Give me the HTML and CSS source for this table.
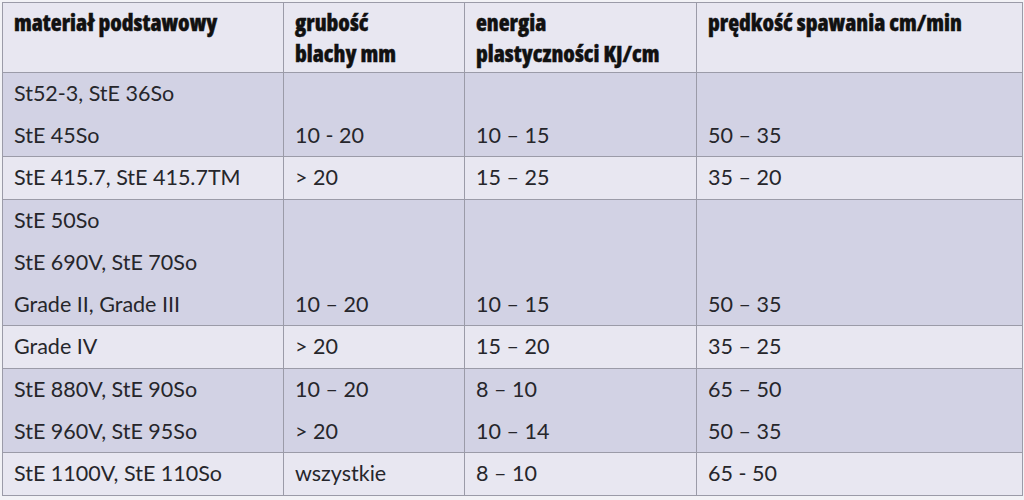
FILE: index.html
```html
<!DOCTYPE html>
<html lang="pl">
<head>
<meta charset="utf-8">
<title>Tabela spawania</title>
<link rel="stylesheet" href="styles.css">
</head>
<body>
<div class="wrap">
<table class="weld">
  <colgroup>
    <col class="c1"><col class="c2"><col class="c3"><col class="c4">
  </colgroup>
  <thead>
    <tr>
      <th>materiał podstawowy</th>
      <th>grubość<br>blachy mm</th>
      <th>energia<br>plastyczności KJ/cm</th>
      <th>prędkość spawania cm/min</th>
    </tr>
  </thead>
  <tbody>
    <tr class="dark">
      <td>St52-3, StE 36So<br>StE 45So</td>
      <td class="bot">10 - 20</td>
      <td class="bot">10 – 15</td>
      <td class="bot">50 – 35</td>
    </tr>
    <tr class="light">
      <td>StE 415.7, StE 415.7TM</td>
      <td>&gt; 20</td>
      <td>15 – 25</td>
      <td>35 – 20</td>
    </tr>
    <tr class="dark">
      <td>StE 50So<br>StE 690V, StE 70So<br>Grade II, Grade III</td>
      <td class="bot">10 – 20</td>
      <td class="bot">10 – 15</td>
      <td class="bot">50 – 35</td>
    </tr>
    <tr class="light">
      <td>Grade IV</td>
      <td>&gt; 20</td>
      <td>15 – 20</td>
      <td>35 – 25</td>
    </tr>
    <tr class="dark">
      <td>StE 880V, StE 90So<br>StE 960V, StE 95So</td>
      <td>10 – 20<br>&gt; 20</td>
      <td>8 – 10<br>10 – 14</td>
      <td>65 – 50<br>50 – 35</td>
    </tr>
    <tr class="light">
      <td>StE 1100V, StE 110So</td>
      <td>wszystkie</td>
      <td>8 – 10</td>
      <td>65 - 50</td>
    </tr>
  </tbody>
</table>
</div>
</body>
</html>
```
FILE: styles.css
```css
html, body {
  margin: 0;
  padding: 0;
  background: #f2f2f6;
}
.wrap {
  padding: 2px 2px 0 2px;
}
.weld {
  border-collapse: collapse;
  width: 1020px;
  table-layout: fixed;
  color: #1e1e22;
}
.c1 { width: 281px; }
.c2 { width: 181px; }
.c3 { width: 232px; }
.c4 { width: 326px; }
.weld th, .weld td {
  border: 1px solid #9b9ba8;
  text-align: left;
  padding: 0 6px 0 11px;
}
.weld th {
  background: #e8e7f1;
  font-family: "Open Sans", "DejaVu Sans", sans-serif;
  font-weight: 800;
  font-stretch: 87%;
  font-size: 22.5px;
  line-height: 30.5px;
  vertical-align: top;
  padding-top: 5px;
  padding-bottom: 3px;
  height: 61px;
  letter-spacing: 0;
  color: #111;
  -webkit-text-stroke: 0.4px #111;
}
.weld td {
  font-family: Lato, "Liberation Sans", sans-serif;
  font-weight: 400;
  font-size: 21.5px;
  line-height: 41.7px;
  vertical-align: top;
  color: #26262b;
}
.weld td.bot {
  vertical-align: bottom;
}
.dark td { background: #d2d2e4; }
.light td { background: #e8e7f1; }
```
